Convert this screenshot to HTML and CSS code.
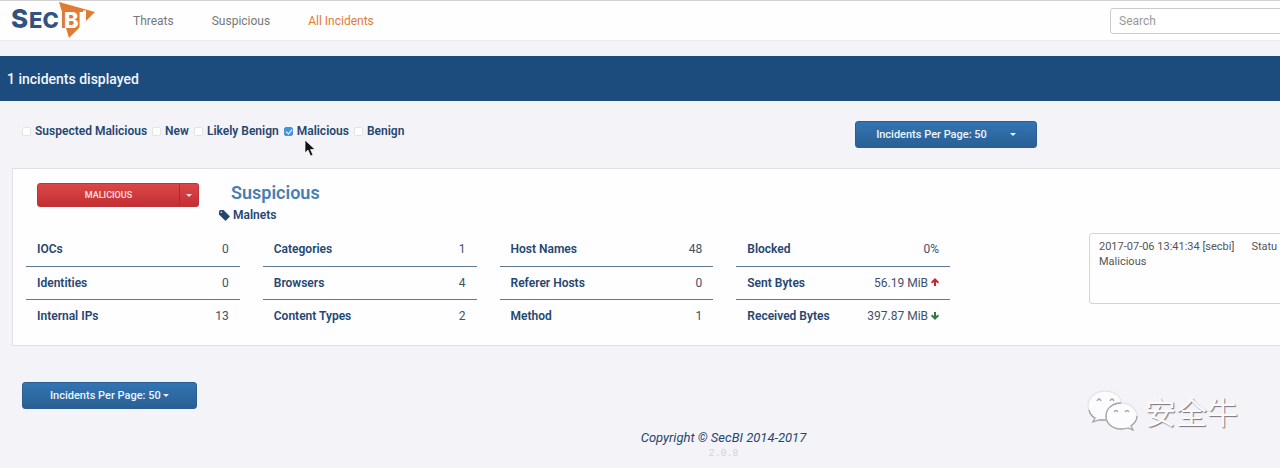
FILE: index.html
```html
<!DOCTYPE html>
<html lang="en">
<head>
<meta charset="utf-8">
<title>SecBI – All Incidents</title>
<link rel="stylesheet" href="styles.css">
</head>
<body>
<header class="topbar">
  <a class="logo" href="#" aria-label="SecBI home">
    <svg width="88" height="40" viewBox="0 0 88 40">
      <path d="M51 1 87 11 61 37 58 27 54 27 54 11Z" fill="#e27b32"/>
      <path d="M75 9.500H78V20L71 27.500H75Z" fill="#fff"/>
      <text class="logo-big" x="3" y="27">S</text>
      <text class="logo-small" x="21" y="27">EC</text>
      <text class="logo-bi" x="56" y="27">BI</text>
    </svg>
  </a>
  <nav class="nav">
    <a href="#">Threats</a>
    <a href="#">Suspicious</a>
    <a class="active" href="#">All Incidents</a>
  </nav>
  <input class="search" type="search" placeholder="Search" aria-label="Search">
</header>

<h1 class="banner">1 incidents displayed</h1>

<main class="content">
  <div class="toolbar">
    <div class="filters">
      <label><input type="checkbox">Suspected Malicious</label>
      <label><input type="checkbox">New</label>
      <label><input type="checkbox">Likely Benign</label>
      <label class="hovered"><input type="checkbox" checked>Malicious
        <svg class="pointer" width="12" height="18" viewBox="0 0 12 18"><path d="M1 1V14L4 11 6.500 17 9 16 6.500 10.500H11Z" fill="#111" stroke="#fff" stroke-width=".7"/></svg>
      </label>
      <label><input type="checkbox">Benign</label>
    </div>
    <button class="btn btn-top" type="button">Incidents Per Page: 50 <span class="caret"></span></button>
  </div>

  <section class="card">
    <div class="card-head">
      <div class="split">
        <button class="split-main" type="button">MALICIOUS</button>
        <button class="split-drop" type="button" aria-label="Change status"><span class="caret"></span></button>
      </div>
      <div class="titles">
        <h2><a href="#">Suspicious</a></h2>
        <p class="tag"><svg width="11" height="11" viewBox="0 0 11 11"><path d="M0 1.500Q0 0 1.500 0H4.500L10.500 6Q11 6.500 10.500 7L7 10.500Q6.500 11 6 10.500L0 4.500Z" fill="#24476f"/><circle cx="2.300" cy="2.300" r=".8" fill="#fff"/></svg>Malnets</p>
      </div>
    </div>
    <div class="card-body">
      <div class="stats">
        <table>
          <tr><th scope="row">IOCs</th><td>0</td></tr>
          <tr><th scope="row">Identities</th><td>0</td></tr>
          <tr><th scope="row">Internal IPs</th><td>13</td></tr>
        </table>
        <table>
          <tr><th scope="row">Categories</th><td>1</td></tr>
          <tr><th scope="row">Browsers</th><td>4</td></tr>
          <tr><th scope="row">Content Types</th><td>2</td></tr>
        </table>
        <table>
          <tr><th scope="row">Host Names</th><td>48</td></tr>
          <tr><th scope="row">Referer Hosts</th><td>0</td></tr>
          <tr><th scope="row">Method</th><td>1</td></tr>
        </table>
        <table>
          <tr><th scope="row">Blocked</th><td>0%</td></tr>
          <tr><th scope="row">Sent Bytes</th><td>56.19 MiB <svg width="8" height="9" viewBox="0 0 8 9"><path d="M4 0 8 4 7 5.500 5 4V8H3V4L1 5.500 0 4Z" fill="#c4282f"/></svg></td></tr>
          <tr><th scope="row">Received Bytes</th><td>397.87 MiB <svg width="8" height="9" viewBox="0 0 8 9"><path d="M4 9 8 5 7 3.500 5 5V1H3V5L1 3.500 0 5Z" fill="#2f7a3c"/></svg></td></tr>
        </table>
      </div>
      <div class="history">
        <div class="entry"><span>2017-07-06 13:41:34 [secbi]</span><span>Statu</span></div>
        <div>Malicious</div>
      </div>
    </div>
  </section>

  <button class="btn btn-bottom" type="button">Incidents Per Page: 50 <span class="caret"></span></button>
</main>

<footer class="footer">
  <p class="copyright">Copyright © SecBI 2014-2017</p>
  <p class="version">2.0.8</p>
</footer>

<div class="watermark">
  <svg width="52" height="42" viewBox="0 0 52 42" stroke="#a5a3aa" stroke-width="1.300" fill="#fcfbfe">
    <path d="M18 1C8 1 1 8 1 16C1 21 4 25 8 28L6 32 12 30C28 33 35 26 35 16C35 7 28 1 18 1Z" stroke="#e6e4ea"/>
    <path d="M2 20C3 25 6 27 8 28L6 32 12 30H19" fill="none"/>
    <path d="M34 13C25 13 19 19 19 26C19 34 26 39 34 39Q38 39 41 38L46 40 44 36C48 33 50 30 50 26C50 19 43 13 34 13Z" stroke="#e6e4ea"/>
    <path d="M34 13C25 13 19 19 19 26C19 34 26 39 34 39Q38 39 41 38L46 40 44 36C48 33 50 30 50 26" fill="none"/>
    <path d="M10 11q2-4 4 0M23 11q2-4 4 0M27 22q2-3 4 0M38 22q2-3 4 0" fill="none"/>
  </svg>
  <span>安全牛</span>
</div>
</body>
</html>
```

FILE: styles.css
```css
* { box-sizing: border-box; }

body {
  position: relative;
  margin: 0;
  min-height: 100vh;
  overflow-x: hidden;
  background: #f4f3f7;
  color: #24476f;
  font: 12px/16px Roboto, "Liberation Sans", sans-serif;
}

h1, h2, p { margin: 0; }
a { color: inherit; text-decoration: none; }
button, input { font: inherit; }

.topbar {
  display: flex;
  align-items: center;
  height: 41px;
  padding-left: 8px;
  background: #fefefe;
  border-top: 1px solid #d4d1d3;
  border-bottom: 1px solid #ececf0;
}

.logo, .logo svg { display: block; }
.logo text { font-family: Inter, sans-serif; font-weight: 800; }
.logo-big { font-size: 26px; fill: #34527f; }
.logo-small { font-size: 22px; fill: #34527f; }
.logo-bi { font-size: 22px; fill: #fff; }

.nav {
  display: flex;
  gap: 38px;
  margin-left: 37px;
  color: #777;
}
.nav a { font-size: 12px; }
.nav .active { color: #e07b35; }

.search {
  flex: 0 0 200px;
  height: 26px;
  margin: 0 -30px 0 auto;
  padding: 0 8px;
  border: 1px solid #ccc;
  border-radius: 3px;
  background: #fff;
  font-size: 12px;
}
.search::placeholder { color: #999; }

.banner {
  margin-top: 15px;
  padding: 13px 7px 12px;
  background: #1c4b7e;
  color: #f3f7fb;
  font-size: 14px;
  line-height: 20px;
  font-weight: 500;
}

.toolbar {
  display: flex;
  align-items: center;
  padding: 20px 19% 20px 22px;
}

.filters {
  display: flex;
  gap: 5px;
  margin-bottom: 8px;
  font-weight: 600;
}
.filters label {
  position: relative;
  display: flex;
  align-items: center;
  gap: 4px;
}
.filters input {
  appearance: none;
  width: 9px;
  height: 9px;
  margin: 2px 0 0;
  border: 1px solid #e4e4e8;
  border-radius: 2px;
  background: #fff;
}
.filters input:checked {
  border-color: #4595dc;
  background: #4595dc;
}
.filters input:checked::after {
  content: "";
  display: block;
  width: 3px;
  height: 5px;
  margin: 0 2px;
  border: solid #fff;
  border-width: 0 1px 1px 0;
  transform: rotate(40deg);
}
.pointer { position: absolute; left: 20px; top: 16px; }

.caret {
  display: inline-block;
  border: solid transparent;
  border-width: 3px 3px 0;
  border-top-color: currentColor;
  vertical-align: middle;
}

.btn {
  height: 27px;
  padding: 0 27px;
  border: 1px solid #2a5f94;
  border-radius: 3px;
  background: linear-gradient(#3275b3, #2a5f94);
  color: #edf5fc;
  font-size: 11px;
  font-weight: 500;
}
.btn-top {
  display: flex;
  align-items: center;
  gap: 23px;
  margin-left: auto;
  padding: 0 20px;
}

.card {
  margin: 0 -20px 0 12px;
  padding: 12px 10px 13px 13px;
  border: 1px solid #e0dfe4;
  background: #fefdff;
}
.card-head { display: flex; align-items: flex-start; gap: 20px; }

.split { display: flex; width: 162px; margin: 2px 0 0 11px; }
.split button {
  height: 24px;
  padding: 0;
  border: 1px solid #bd3337;
  background: linear-gradient(#dc4649, #c23034);
  color: #fbe3e3;
  font-size: 9px;
  font-weight: 500;
}
.split .split-main { flex: 1; border-radius: 3px 0 0 3px; }
.split .split-drop { width: 20px; border-left-color: #a82c30; border-radius: 0 3px 3px 0; margin-left: -1px; }

.titles h2 {
  padding-left: 12px;
  color: #467fb2;
  font-size: 18px;
  line-height: 24px;
  font-weight: 600;
}
.tag { display: flex; align-items: center; gap: 3px; margin-top: 2px; font-weight: 600; }

.card-body { display: flex; margin-top: 10px; }
.stats {
  flex: 1;
  display: grid;
  grid-template-columns: repeat(4, 1fr);
  gap: 23px;
}
.stats table { width: 100%; border-collapse: collapse; }
.stats th, .stats td { height: 33px; padding: 0 11px; }
.stats tr + tr > * { border-top: 1px solid #60798e; }
.stats th { text-align: left; font-weight: 600; white-space: nowrap; }
.stats td { text-align: right; color: #3d5268; white-space: nowrap; }

.history {
  flex: 0 0 200px;
  height: 71px;
  margin-left: 11%;
  padding: 5px 9px;
  overflow: hidden;
  border: 1px solid #d4d3d7;
  border-radius: 3px;
  color: #555;
  font-size: 11px;
  line-height: 15px;
}
.entry { display: flex; gap: 17px; white-space: nowrap; }

.btn-bottom { display: block; margin: 36px 0 0 22px; }

.footer {
  padding: 21px 0 6px;
  margin-left: 167px;
  text-align: center;
}
.copyright { font-size: 13px; font-style: italic; }
.version { color: #d6d3d9; font: 10px/15px "Liberation Mono", monospace; }

.watermark {
  position: absolute;
  right: 42px;
  bottom: 35px;
  display: flex;
  align-items: center;
  gap: 6px;
  color: #fbfafd;
  font: 31px/44px "Noto Sans CJK SC", sans-serif;
  text-shadow: 1px 1px 1px #77757c;
}
```
